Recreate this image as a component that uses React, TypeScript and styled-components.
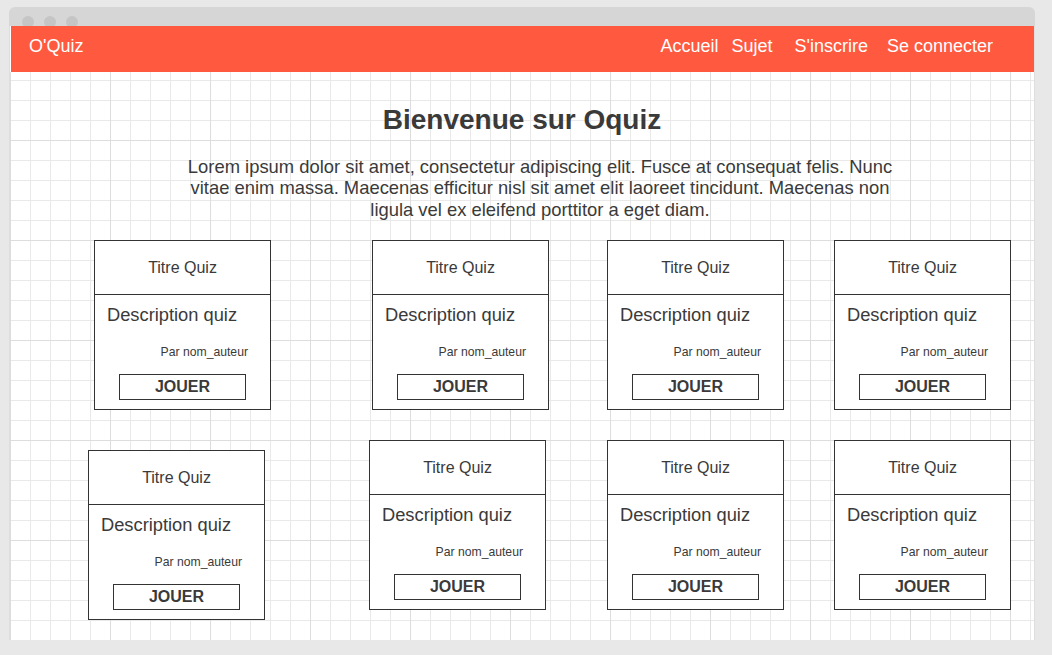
import React from "react";
import styled, { createGlobalStyle } from "styled-components";

const GlobalStyle = createGlobalStyle`
  html, body {
    margin: 0;
    padding: 0;
    background: #e8e8e8;
  }
  body {
    font-family: "Liberation Sans", Arial, sans-serif;
    color: #333;
  }
`;

const Page = styled.div`
  padding: 7px 0 15px 9px;
`;

const Window = styled.div`
  width: 1026px;
  display: flex;
  flex-direction: column;
`;

const TitleBar = styled.div`
  height: 19px;
  box-sizing: border-box;
  background: #d6d6d6;
  border-radius: 6px 6px 0 0;
  padding: 9px 0 0 13px;
  display: flex;
  gap: 10px;
  overflow: hidden;
`;

const Dot = styled.span`
  width: 12px;
  height: 12px;
  border-radius: 50%;
  background: #c5c5c5;
  flex: none;
`;

const Body = styled.div`
  border-left: 1px solid #dedede;
  border-right: 1px solid #dedede;
  background: #fff;
`;

const Header = styled.header`
  height: 46px;
  box-sizing: border-box;
  margin-left: 1px;
  background: #ff5a3f;
  color: #fff;
  display: flex;
  align-items: flex-start;
  padding: 10px 41px 0 18px;
  font-size: 18px;
`;

const Brand = styled.div`
  font-size: 18px;
`;

const Nav = styled.nav`
  margin-left: auto;
  display: flex;
`;

const NavLink = styled.a<{ $space: number }>`
  color: #fff;
  text-decoration: none;
  margin-left: ${(p) => p.$space}px;
`;

const Content = styled.main`
  padding: 32px 0 20px;
  background-color: #fff;
  background-image:
    linear-gradient(to right, #dddddd 1px, transparent 1px),
    linear-gradient(to bottom, #dddddd 1px, transparent 1px),
    linear-gradient(to right, #e9e9e9 1px, transparent 1px),
    linear-gradient(to bottom, #e9e9e9 1px, transparent 1px);
  background-size: 100px 100px, 100px 100px, 20px 20px, 20px 20px;
  background-position: 0 68px, 0 68px, 0 8px, 0 8px;
`;

const Title = styled.h1`
  margin: 0;
  text-align: center;
  font-size: 28px;
  font-weight: bold;
  line-height: normal;
  color: #3a3a3a;
`;

const Intro = styled.p`
  margin: 20px 0 0 166px;
  width: 728px;
  text-align: center;
  font-size: 18.4px;
  line-height: 21.4px;
  color: #3a3a3a;
`;

const CardGrid = styled.section`
  margin-top: 20px;
  padding-left: 84px;
  display: grid;
  grid-template-columns: 278px 235px 227px 177px;
  row-gap: 30px;
  align-items: start;
`;

const Card = styled.article<{ $dx: number; $dy: number }>`
  width: 177px;
  height: 170px;
  box-sizing: border-box;
  border: 1px solid #333;
  background: #fff;
  margin-left: ${(p) => p.$dx}px;
  margin-top: ${(p) => p.$dy}px;
  display: flex;
  flex-direction: column;
`;

const CardHead = styled.div`
  height: 54px;
  box-sizing: border-box;
  border-bottom: 1px solid #333;
  display: flex;
  align-items: center;
  justify-content: center;
  font-size: 16px;
  color: #3a3a3a;
`;

const CardBody = styled.div`
  display: flex;
  flex-direction: column;
  padding: 9px 0 0;
`;

const Description = styled.div`
  padding-left: 12px;
  font-size: 18.3px;
  line-height: 21px;
  color: #3a3a3a;
`;

const Author = styled.div`
  margin-top: 20px;
  padding-right: 22px;
  text-align: right;
  font-size: 12.2px;
  line-height: 14px;
  color: #3a3a3a;
`;

const PlayButton = styled.button`
  margin: 15px 0 0 24px;
  width: 127px;
  height: 26px;
  box-sizing: border-box;
  border: 1px solid #333;
  background: #fff;
  padding: 0;
  font-family: "Liberation Sans", Arial, sans-serif;
  font-size: 16px;
  font-weight: bold;
  color: #3a3a3a;
  cursor: pointer;
`;

const cards = [
  { dx: 0, dy: 0 },
  { dx: 0, dy: 0 },
  { dx: 0, dy: 0 },
  { dx: 0, dy: 0 },
  { dx: -6, dy: 10 },
  { dx: -3, dy: 0 },
  { dx: 0, dy: 0 },
  { dx: 0, dy: 0 },
];

export default function App() {
  return (
    <>
      <GlobalStyle />
      <Page>
        <Window>
          <TitleBar>
            <Dot />
            <Dot />
            <Dot />
          </TitleBar>
          <Body>
            <Header>
              <Brand>O'Quiz</Brand>
              <Nav>
                <NavLink $space={0} href="#">Accueil</NavLink>
                <NavLink $space={13} href="#">Sujet</NavLink>
                <NavLink $space={22} href="#">S'inscrire</NavLink>
                <NavLink $space={19} href="#">Se connecter</NavLink>
              </Nav>
            </Header>
            <Content>
              <Title>Bienvenue sur Oquiz</Title>
              <Intro>
                Lorem ipsum dolor sit amet, consectetur adipiscing elit. Fusce at consequat felis. Nunc
                vitae enim massa. Maecenas efficitur nisl sit amet elit laoreet tincidunt. Maecenas non
                ligula vel ex eleifend porttitor a eget diam.
              </Intro>
              <CardGrid>
                {cards.map((c, i) => (
                  <Card key={i} $dx={c.dx} $dy={c.dy}>
                    <CardHead>Titre Quiz</CardHead>
                    <CardBody>
                      <Description>Description quiz</Description>
                      <Author>Par nom_auteur</Author>
                      <PlayButton>JOUER</PlayButton>
                    </CardBody>
                  </Card>
                ))}
              </CardGrid>
            </Content>
          </Body>
        </Window>
      </Page>
    </>
  );
}
